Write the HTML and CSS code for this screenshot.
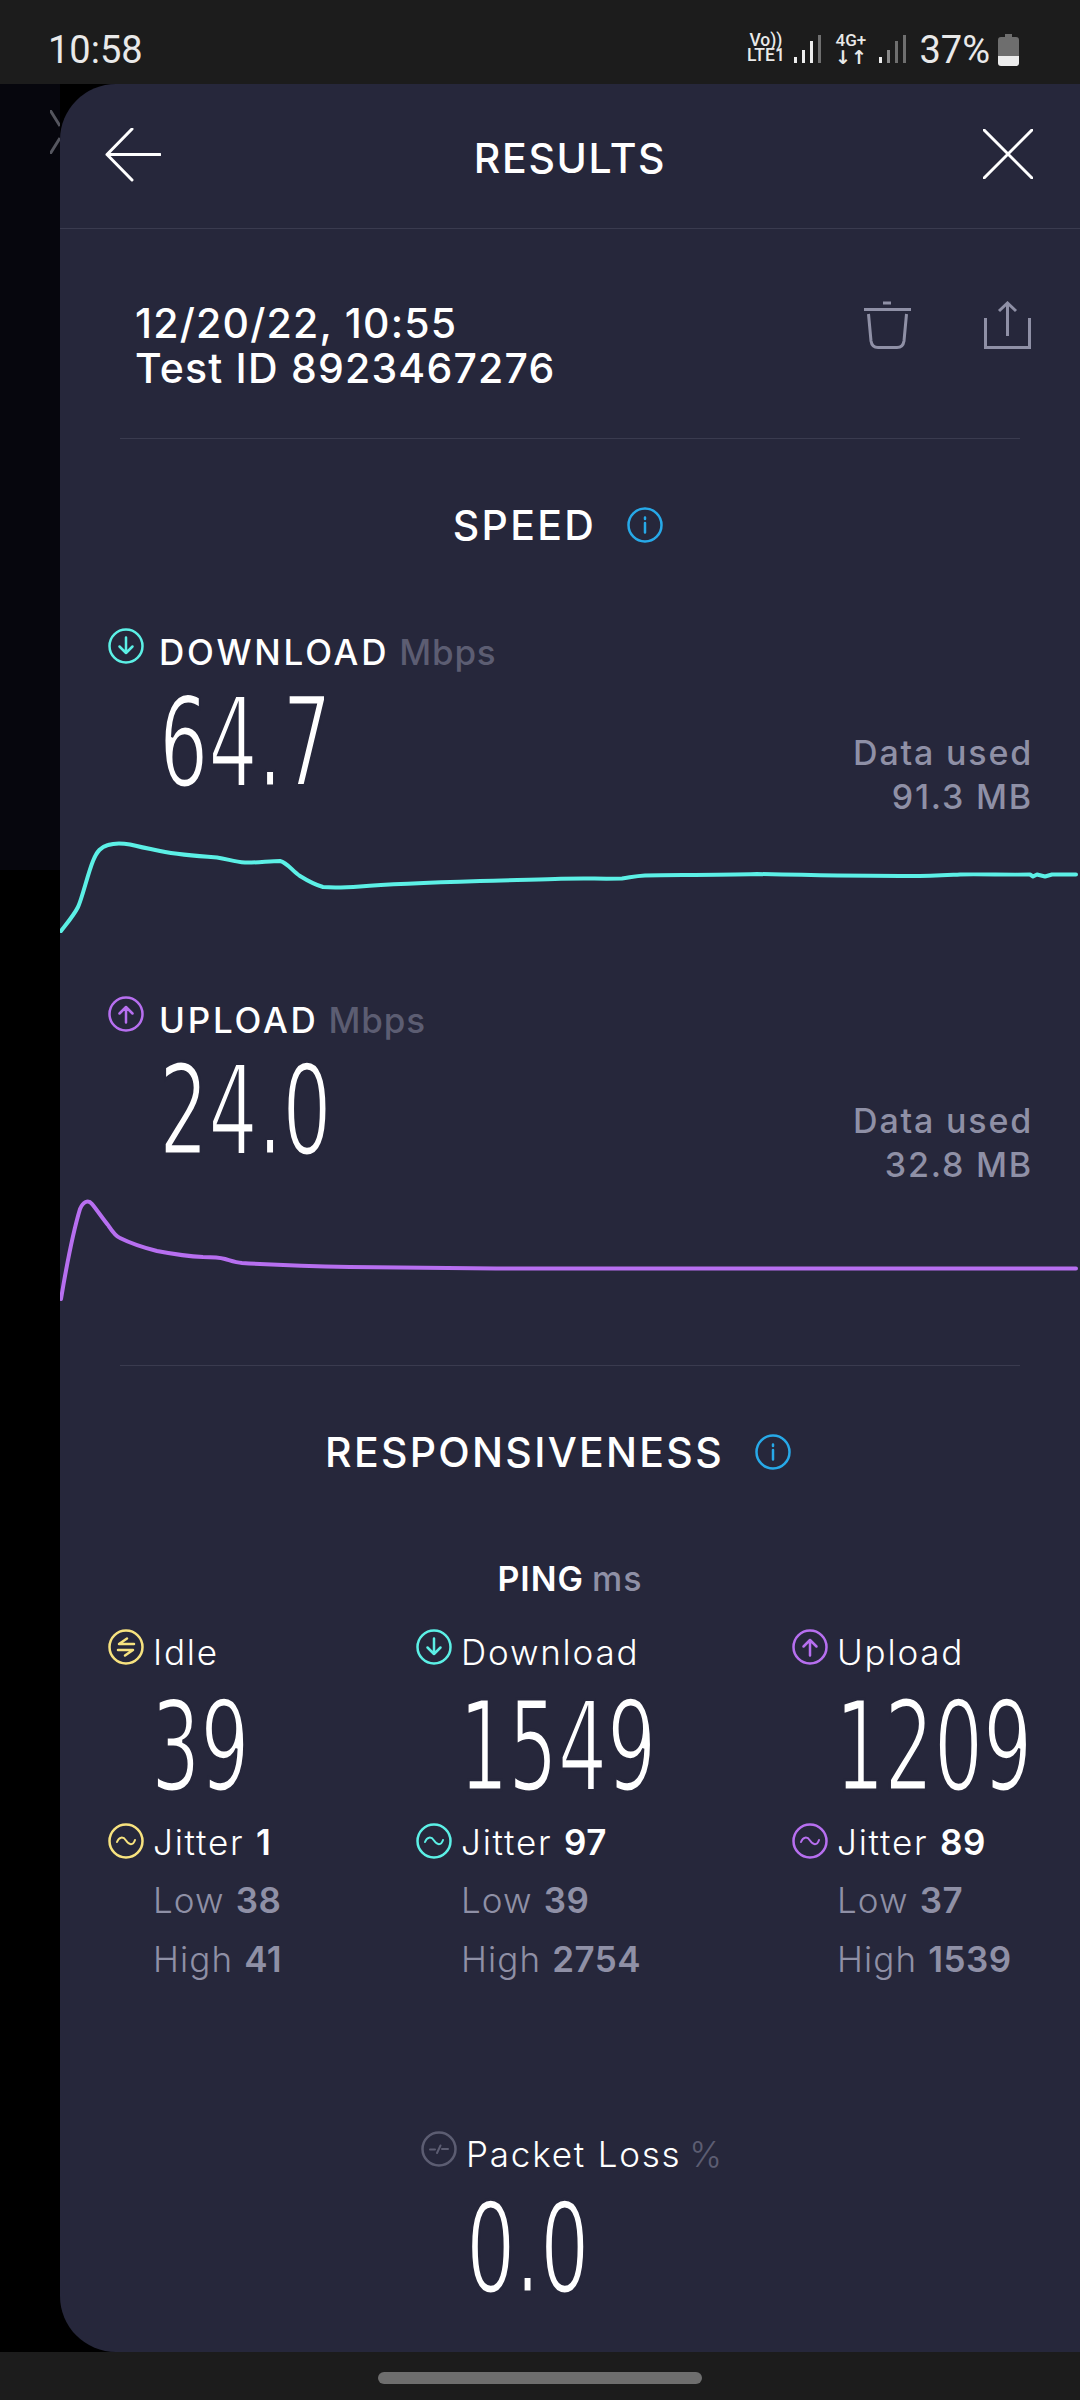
FILE: index.html
```html
<!DOCTYPE html>
<html lang="en">
<head>
<meta charset="utf-8">
<title>Results</title>
<link rel="stylesheet" href="styles.css">
</head>
<body>
<svg class="sprite" aria-hidden="true">
  <symbol id="i-down" viewBox="0 0 36 36"><circle cx="18" cy="18" r="16.5"/><path d="M18 9.5V25M11.5 18.5L18 25L24.500 18.500"/></symbol>
  <symbol id="i-up" viewBox="0 0 36 36"><circle cx="18" cy="18" r="16.5"/><path d="M18 26.500V11M11.500 17.500L18 11L24.500 17.500"/></symbol>
  <symbol id="i-idle" viewBox="0 0 36 36"><circle cx="18" cy="18" r="16.5"/><path d="M26 15H11L19 9.500M10 21H25L17 26.500"/></symbol>
  <symbol id="i-jitter" viewBox="0 0 36 36"><circle cx="18" cy="18" r="16.5"/><path class="thin" d="M9 19C11 14 15 13 18 17.500S25 23 27 17"/></symbol>
  <symbol id="i-packet" viewBox="0 0 36 36"><circle cx="18" cy="18" r="16.500"/><path class="thin" d="M9 18.500H14M16 22L19.500 14.500M21 18H27"/></symbol>
  <symbol id="i-info" viewBox="0 0 36 36"><circle cx="18" cy="18" r="16.500"/><path d="M18 16V25.500M18 10.500V12"/></symbol>
</svg>

<header class="status">
  <span class="status-time">10:58</span>
  <div class="status-right">
    <div class="net-label"><span>Vo))</span><span>LTE1</span></div>
    <svg class="signal signal-a" viewBox="0 0 27 28"><rect y="22" width="3" height="6" fill="#eee"/><rect x="8" y="15" width="3" height="13" fill="#eee"/><rect x="16" y="6" width="3" height="22" fill="#eee"/><rect x="24" width="3" height="28" fill="#6f6f6f"/></svg>
    <div class="net-label net-4g"><span>4G+</span><span class="net-arrows">↓↑</span></div>
    <svg class="signal signal-b" viewBox="0 0 27 28"><rect y="22" width="3" height="6" fill="#eee"/><rect x="8" y="15" width="3" height="13" fill="#8a8a8a"/><rect x="16" y="6" width="3" height="22" fill="#6f6f6f"/><rect x="24" width="3" height="28" fill="#6f6f6f"/></svg>
    <span class="status-pct">37%</span>
    <svg class="battery" viewBox="0 0 21 32"><path d="M7 0H14V3H18Q21 3 21 6V22H0V6Q0 3 3 3H7Z" fill="#6e6e6e"/><path d="M0 22H21V29Q21 32 18 32H3Q0 32 0 29Z" fill="#ececec"/></svg>
  </div>
</header>

<div class="stage">
  <aside class="behind">
    <svg class="behind-x" viewBox="0 0 10 44"><path d="M0 0L10 16M10 28L0 44"/></svg>
  </aside>
  <main class="panel">
    <div class="topbar">
      <svg class="nav-back" viewBox="0 0 56 54"><path d="M27 1L2 26.500L27 52M2 26.500H55"/></svg>
      <h1 class="topbar-title">RESULTS</h1>
      <svg class="nav-close" viewBox="0 0 50 50"><path d="M1 1L49 49M49 1L1 49"/></svg>
    </div>

    <section class="test-info">
      <div class="test-text"><div>12/20/22, 10:55</div><div>Test ID 8923467276</div></div>
      <div class="test-actions">
        <svg class="act" viewBox="0 0 47 48"><path d="M4.500 13L7 40Q8 46.500 14 46.500H33Q39 46.500 40 40L42.500 13M0 8.500H47M19 2H27"/></svg>
        <svg class="act" viewBox="0 0 47 48"><path d="M1.500 17V46.500H45.500V17M23.500 35V2M15 10L23.500 2L32 10"/></svg>
      </div>
    </section>
    <hr class="rule">

    <h2 class="section-title speed-title">SPEED<svg class="ic info"><use href="#i-info"/></svg></h2>

    <section class="metric metric-dl">
      <div class="metric-head"><svg class="ic cyan"><use href="#i-down"/></svg><span class="metric-name">DOWNLOAD</span><span class="unit">Mbps</span></div>
      <div class="metric-body">
        <div class="big">64.7</div>
        <div class="data-used"><div>Data used</div><div>91.3 MB</div></div>
      </div>
      <svg class="chart" viewBox="60 830 1020 110"><path class="line-cyan" d="M61 932C68 923 74 916 78 908C82 900 88 874 93 862C97 852 101 848 108 846C114 844 122 844 130 845.500C140 848 150 850 160 852C175 855 195 857 217 858.500C228 860 234 863 245 863.500C255 864 270 862 280 862C288 864 292 872 300 877C308 882 316 886 323 888C335 889 345 888.500 360 887.500C390 885 430 883.500 480 882C510 881 530 881 555 880C580 879 600 880 622 879.500C630 878.500 635 877 645 876.500C680 876 720 876 757 875C800 876 860 877 900 877C925 877.500 940 876.500 960 875.500C980 875 1010 876 1030 875.500L1033 877.500L1037 875.500L1045 877.500L1052 875.500H1076"/></svg>
    </section>

    <section class="metric metric-ul">
      <div class="metric-head"><svg class="ic purple"><use href="#i-up"/></svg><span class="metric-name">UPLOAD</span><span class="unit">Mbps</span></div>
      <div class="metric-body">
        <div class="big">24.0</div>
        <div class="data-used"><div>Data used</div><div>32.8 MB</div></div>
      </div>
      <svg class="chart chart-ul" viewBox="60 1190 1020 112"><path class="line-purple" d="M61 1300C66 1270 74 1230 80 1210C83 1203 88 1200 92 1205C97 1211 103 1220 108 1226C112 1232 115 1237 120 1239C130 1244 145 1249 157 1252C170 1254.500 190 1257.500 203 1258C212 1258 218 1258 225 1260C232 1262 236 1263.500 242 1264C260 1265 300 1267 350 1268C400 1269 480 1269.500 550 1269.500H1076"/></svg>
    </section>

    <hr class="rule rule-resp">

    <h2 class="section-title resp-title">RESPONSIVENESS<svg class="ic info"><use href="#i-info"/></svg></h2>

    <div class="ping-title"><span class="ping-name">PING</span><span class="ping-unit">ms</span></div>

    <section class="ping-grid">
      <div class="ping-col">
        <div class="ping-head"><svg class="ic yellow"><use href="#i-idle"/></svg><span>Idle</span></div>
        <div class="big big-ping">39</div>
        <div class="ping-head jitter"><svg class="ic yellow"><use href="#i-jitter"/></svg><span>Jitter <b>1</b></span></div>
        <div class="ping-stat">Low <b>38</b></div>
        <div class="ping-stat">High <b>41</b></div>
      </div>
      <div class="ping-col">
        <div class="ping-head"><svg class="ic cyan"><use href="#i-down"/></svg><span>Download</span></div>
        <div class="big big-ping">1549</div>
        <div class="ping-head jitter"><svg class="ic cyan"><use href="#i-jitter"/></svg><span>Jitter <b>97</b></span></div>
        <div class="ping-stat">Low <b>39</b></div>
        <div class="ping-stat">High <b>2754</b></div>
      </div>
      <div class="ping-col">
        <div class="ping-head"><svg class="ic purple"><use href="#i-up"/></svg><span>Upload</span></div>
        <div class="big big-ping">1209</div>
        <div class="ping-head jitter"><svg class="ic purple"><use href="#i-jitter"/></svg><span>Jitter <b>89</b></span></div>
        <div class="ping-stat">Low <b>37</b></div>
        <div class="ping-stat">High <b>1539</b></div>
      </div>
    </section>

    <section class="packet">
      <div class="ping-head packet-head"><svg class="ic gray"><use href="#i-packet"/></svg><span>Packet Loss <i class="pct">%</i></span></div>
      <div class="big big-packet">0.0</div>
    </section>
  </main>
</div>

<footer class="navbar"><div class="pill"></div></footer>
</body>
</html>
```

FILE: styles.css
```css
* { box-sizing: border-box; }
html, body { margin: 0; padding: 0; }
body {
  width: 1080px;
  height: 2400px;
  background: #000;
  color: #fff;
  font-family: Inter, "Noto Sans", sans-serif;
  display: flex;
  flex-direction: column;
  overflow: hidden;
}
.sprite { display: none; }

/* status bar */
.status {
  height: 84px;
  flex: none;
  background: #1c1c1c;
  display: flex;
  justify-content: space-between;
  padding: 28px 61px 0 48px;
  font-family: Roboto, sans-serif;
  color: #e9e9e9;
}
.status-time, .status-pct { font-size: 38px; line-height: 44px; }
.status-right { display: flex; align-items: flex-start; }
.net-label {
  display: flex;
  flex-direction: column;
  align-items: center;
  width: 37px;
  margin-top: 5px;
  font-size: 17.500px;
  line-height: 15px;
  font-weight: 500;
  white-space: nowrap;
}
.net-4g { margin-left: 13px; width: 33px; font-size: 17px; line-height: 14px; }
.net-arrows { font-family: "DejaVu Sans", sans-serif; font-size: 19px; line-height: 20px; font-weight: 700; }
.signal { width: 27px; height: 28px; margin-top: 7px; }
.signal-a { margin-left: 10px; }
.signal-b { margin-left: 12px; }
.status-pct { margin-left: 13px; }
.battery { width: 21px; height: 32px; margin: 6px 0 0 8px; }

/* stage */
.stage { flex: 1; display: flex; min-height: 0; background: #000; }
.behind { width: 60px; flex: none; height: 786px; background: #06060d; padding-top: 26px; padding-left: 50px; }
.behind-x { display: block; width: 10px; height: 44px; }
.behind-x path { fill: none; stroke: #55565f; stroke-width: 3; }
.panel {
  flex: 1;
  background: #26273b;
  border-radius: 56px 0 0 56px;
  min-width: 0;
}

/* top bar */
.topbar {
  height: 145px;
  border-bottom: 1px solid #3a3b4f;
  display: flex;
  justify-content: space-between;
  align-items: center;
  padding: 0 47px 2px 45px;
}
.nav-back { width: 56px; height: 54px; }
.nav-close { width: 50px; height: 50px; margin-top: -2px; }
.nav-back path, .nav-close path { fill: none; stroke: #fff; stroke-width: 3; stroke-linecap: round; stroke-linejoin: round; }
.topbar-title { margin: 5px 4px 0 0; font-size: 41px; line-height: 48px; font-weight: 500; letter-spacing: 1.700px; }

/* test info */
.test-info { display: flex; justify-content: space-between; padding: 72px 49px 0 75px; height: 209px; }
.test-text { font-size: 41px; line-height: 45px; font-weight: 500; letter-spacing: 1.200px; }
.test-actions { display: flex; gap: 73px; }
.act { width: 47px; height: 48px; }
.act path { fill: none; stroke: #8f90a6; stroke-width: 3; }

.rule { margin: 0 60px; border: 0; border-top: 1px solid #3a3b4f; height: 0; }
.rule-resp { margin-top: 64px; }

.section-title {
  margin: 0;
  display: flex;
  justify-content: center;
  align-items: center;
  gap: 31px;
  font-size: 41px;
  line-height: 48px;
  font-weight: 500;
  letter-spacing: 2.300px;
}
.speed-title { margin-top: 62px; padding-right: 24px; }
.resp-title { margin-top: 62px; padding-right: 24px; }

/* icons */
.ic { width: 36px; height: 36px; flex: none; fill: none; stroke-width: 2.500; stroke-linecap: round; stroke-linejoin: round; }
.thin { stroke-width: 2; }
.cyan { stroke: #5cf0e6; }
.purple { stroke: #b76ff0; }
.yellow { stroke: #f7e27f; }
.gray { stroke: #5c5d72; }
.info { stroke: #27a9e8; }

/* metrics */
.metric-dl { margin-top: 79px; }
.metric-ul { margin-top: 57px; }
.metric-head { display: flex; align-items: flex-start; padding-left: 48px; }
.metric-name { margin-left: 15px; font-size: 35px; line-height: 41px; font-weight: 500; margin-top: 4px; letter-spacing: 2.800px; }
.unit { margin-left: 10px; font-size: 35px; line-height: 41px; font-weight: 500; color: #5c5d72; margin-top: 4px; letter-spacing: .8px; }
.metric-body { display: flex; justify-content: space-between; height: 158px; padding: 0 47px 0 99px; }
.big {
  font-family: "DejaVu Sans Condensed", "DejaVu Sans", sans-serif;
  font-size: 125px;
  line-height: 140px;
  -webkit-text-stroke: 3px #26273b;
  transform: scaleX(.69);
  transform-origin: left center;
  white-space: nowrap;
}
.data-used { text-align: right; color: #8f90a6; font-size: 34px; line-height: 44px; font-weight: 500; padding-top: 58px; letter-spacing: 1.800px; }
.chart { display: block; width: 1020px; height: 110px; margin-top: -2px; }
.chart-ul { height: 112px; margin-top: -10px; }
.line-cyan, .line-purple { fill: none; stroke-width: 4; stroke-linejoin: round; stroke-linecap: round; }
.line-cyan { stroke: #5cf0e6; }
.line-purple { stroke: #b76ff0; }

/* ping */
.ping-title { display: flex; justify-content: center; gap: 8px; margin-top: 83px; font-size: 34px; line-height: 40px; font-weight: 600; letter-spacing: 1px; }
.ping-unit { color: #8f90a6; font-weight: 500; }
.ping-grid { display: grid; grid-template-columns: 308px 376px 1fr; padding-left: 48px; margin-top: 30px; }
.ping-head { display: flex; align-items: flex-start; gap: 9px; font-size: 35px; line-height: 44px; font-weight: 300; letter-spacing: 1.800px; white-space: nowrap; }
.ping-head span { margin-top: 1px; }
.ping-head b, .ping-stat b { font-weight: 600; letter-spacing: .5px; }
.big-ping { margin-left: 43px; line-height: 146px; height: 149px; }
.jitter { margin-bottom: -1px; }
.jitter span { margin-top: -3px; }
.ping-stat { padding-left: 45px; margin-top: 15px; color: #8f90a6; font-size: 35px; line-height: 44px; font-weight: 300; letter-spacing: 1.100px; }

/* packet */
.packet { margin-top: 150px; padding-left: 361px; }
.pct { font-style: normal; color: #5c5d72; margin-left: -4px; }
.big-packet { margin-left: 45px; line-height: 146px; height: 136px; }

/* nav bar */
.navbar { height: 48px; flex: none; background: #1c1c1c; display: flex; justify-content: center; padding-top: 20px; }
.pill { width: 324px; height: 12px; border-radius: 6px; background: #6e6e6e; }
```
